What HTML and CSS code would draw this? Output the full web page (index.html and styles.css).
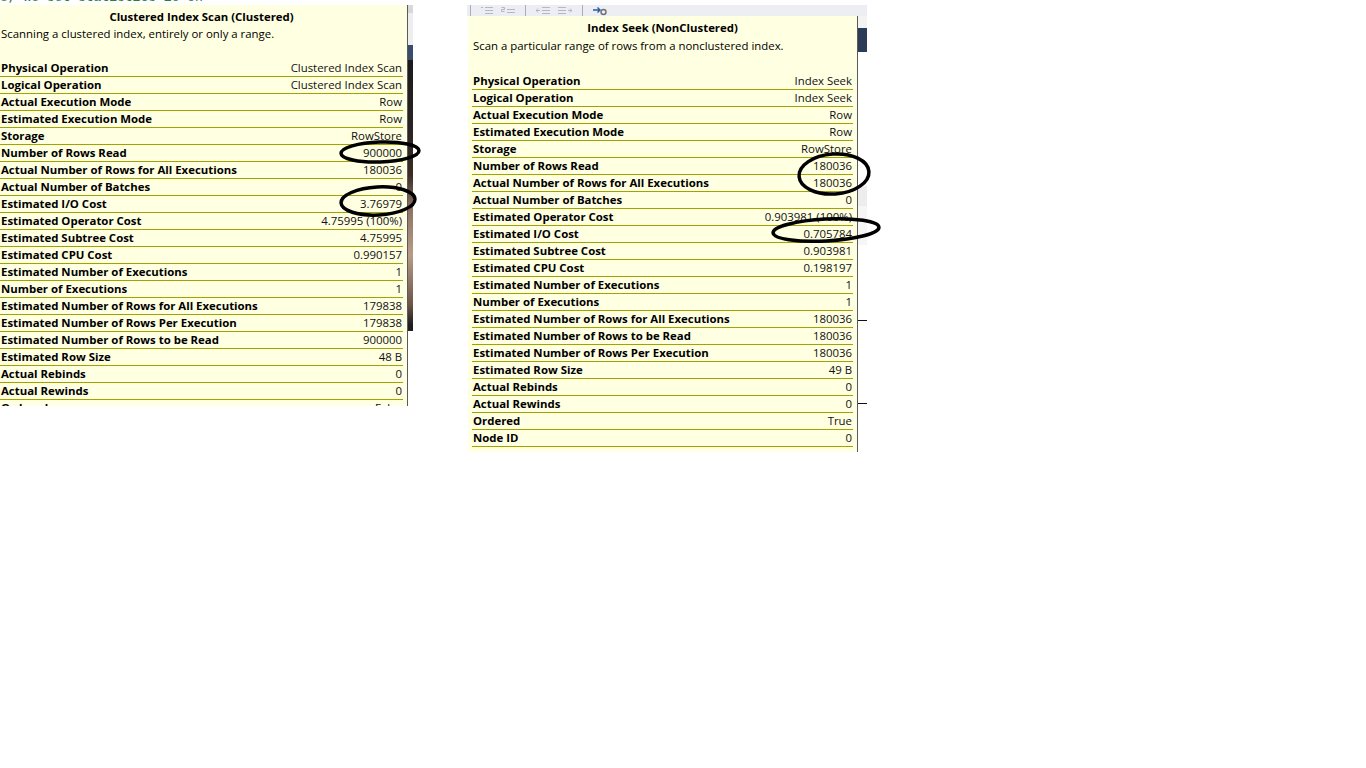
FILE: index.html
```html
<!DOCTYPE html>
<html>
<head>
<meta charset="utf-8">
<link rel="stylesheet" href="styles.css">
</head>
<body>
<div class="canvas">
  <div class="shot shot-left">
    <div class="code-strip"><span class="code-line">e, we set statistics io on</span></div>
    <div class="shot-body">
      <div class="tip tip-left">
        <div class="tip-title">Clustered Index Scan (Clustered)</div>
        <div class="tip-desc">Scanning a clustered index, entirely or only a range.</div>
        <div class="rows">
          <div class="row"><span class="k">Physical Operation</span><span class="v">Clustered Index Scan</span></div>
          <div class="row"><span class="k">Logical Operation</span><span class="v">Clustered Index Scan</span></div>
          <div class="row"><span class="k">Actual Execution Mode</span><span class="v">Row</span></div>
          <div class="row"><span class="k">Estimated Execution Mode</span><span class="v">Row</span></div>
          <div class="row"><span class="k">Storage</span><span class="v">RowStore</span></div>
          <div class="row"><span class="k">Number of Rows Read</span><span class="v">900000</span></div>
          <div class="row"><span class="k">Actual Number of Rows for All Executions</span><span class="v">180036</span></div>
          <div class="row"><span class="k">Actual Number of Batches</span><span class="v">0</span></div>
          <div class="row"><span class="k">Estimated I/O Cost</span><span class="v">3.76979</span></div>
          <div class="row"><span class="k">Estimated Operator Cost</span><span class="v">4.75995 (100%)</span></div>
          <div class="row"><span class="k">Estimated Subtree Cost</span><span class="v">4.75995</span></div>
          <div class="row"><span class="k">Estimated CPU Cost</span><span class="v">0.990157</span></div>
          <div class="row"><span class="k">Estimated Number of Executions</span><span class="v">1</span></div>
          <div class="row"><span class="k">Number of Executions</span><span class="v">1</span></div>
          <div class="row"><span class="k">Estimated Number of Rows for All Executions</span><span class="v">179838</span></div>
          <div class="row"><span class="k">Estimated Number of Rows Per Execution</span><span class="v">179838</span></div>
          <div class="row"><span class="k">Estimated Number of Rows to be Read</span><span class="v">900000</span></div>
          <div class="row"><span class="k">Estimated Row Size</span><span class="v">48 B</span></div>
          <div class="row"><span class="k">Actual Rebinds</span><span class="v">0</span></div>
          <div class="row"><span class="k">Actual Rewinds</span><span class="v">0</span></div>
          <div class="row"><span class="k">Ordered</span><span class="v">False</span></div>
        </div>
      </div>
      <div class="side side-left"></div>
    </div>
  </div>

  <div class="shot shot-right">
    <div class="toolbar">
      <span class="sep"></span>
      <svg class="ico" width="12" height="9" viewBox="0 0 12 9"><g stroke="#b4b8c2" stroke-width="1"><path d="M0 1.5h2M4 1.5h8M4 4.5h8M4 7.5h8"/></g></svg>
      <svg class="ico" width="14" height="9" viewBox="0 0 14 9"><g stroke="#b4b8c2" stroke-width="1" fill="none"><path d="M0.5 1.5h3v2h-3v2h3"/><path d="M6 3.5h8M6 6.5h8"/></g></svg>
      <span class="sep"></span>
      <svg class="ico" width="14" height="9" viewBox="0 0 14 9"><g stroke="#b4b8c2" stroke-width="1" fill="none"><path d="M0 4.5h4M2 2.5l-2 2 2 2"/><path d="M6 1.5h8M6 4.5h8M6 7.5h8"/></g></svg>
      <svg class="ico" width="14" height="9" viewBox="0 0 14 9"><g stroke="#b4b8c2" stroke-width="1" fill="none"><path d="M0 1.5h8M0 4.5h8M0 7.5h8"/><path d="M10 4.5h4M12 2.5l2 2-2 2"/></g></svg>
      <span class="sep"></span>
      <svg class="ico" width="14" height="10" viewBox="0 0 14 10"><g fill="none" stroke-width="1.4"><path d="M0 4h7M4.5 1.5l2.5 2.5-2.5 2.5" stroke="#1f5fa8"/><circle cx="10.5" cy="6" r="2.5" stroke="#707070"/></g></svg>
    </div>
    <div class="shot-body">
      <div class="gap-col"></div>
      <div class="tip tip-right">
        <div class="tip-title">Index Seek (NonClustered)</div>
        <div class="tip-desc">Scan a particular range of rows from a nonclustered index.</div>
        <div class="rows">
          <div class="row"><span class="k">Physical Operation</span><span class="v">Index Seek</span></div>
          <div class="row"><span class="k">Logical Operation</span><span class="v">Index Seek</span></div>
          <div class="row"><span class="k">Actual Execution Mode</span><span class="v">Row</span></div>
          <div class="row"><span class="k">Estimated Execution Mode</span><span class="v">Row</span></div>
          <div class="row"><span class="k">Storage</span><span class="v">RowStore</span></div>
          <div class="row"><span class="k">Number of Rows Read</span><span class="v">180036</span></div>
          <div class="row"><span class="k">Actual Number of Rows for All Executions</span><span class="v">180036</span></div>
          <div class="row"><span class="k">Actual Number of Batches</span><span class="v">0</span></div>
          <div class="row"><span class="k">Estimated Operator Cost</span><span class="v">0.903981 (100%)</span></div>
          <div class="row"><span class="k">Estimated I/O Cost</span><span class="v">0.705784</span></div>
          <div class="row"><span class="k">Estimated Subtree Cost</span><span class="v">0.903981</span></div>
          <div class="row"><span class="k">Estimated CPU Cost</span><span class="v">0.198197</span></div>
          <div class="row"><span class="k">Estimated Number of Executions</span><span class="v">1</span></div>
          <div class="row"><span class="k">Number of Executions</span><span class="v">1</span></div>
          <div class="row"><span class="k">Estimated Number of Rows for All Executions</span><span class="v">180036</span></div>
          <div class="row"><span class="k">Estimated Number of Rows to be Read</span><span class="v">180036</span></div>
          <div class="row"><span class="k">Estimated Number of Rows Per Execution</span><span class="v">180036</span></div>
          <div class="row"><span class="k">Estimated Row Size</span><span class="v">49 B</span></div>
          <div class="row"><span class="k">Actual Rebinds</span><span class="v">0</span></div>
          <div class="row"><span class="k">Actual Rewinds</span><span class="v">0</span></div>
          <div class="row"><span class="k">Ordered</span><span class="v">True</span></div>
          <div class="row"><span class="k">Node ID</span><span class="v">0</span></div>
        </div>
      </div>
      <div class="side side-right"></div>
    </div>
  </div>
</div>

<svg class="marks" width="1366" height="768" viewBox="0 0 1366 768">
  <g fill="none" stroke="#000" stroke-width="3.5">
    <ellipse cx="380" cy="152" rx="39" ry="10" transform="rotate(-2 380 152)"/>
    <ellipse cx="378" cy="201" rx="37" ry="14" transform="rotate(-3 378 201)"/>
    <ellipse cx="834" cy="174" rx="35" ry="20" transform="rotate(-4 834 174)"/>
    <ellipse cx="826" cy="230" rx="53" ry="11" transform="rotate(-3 826 230)"/>
  </g>
</svg>
</body>
</html>
```

FILE: styles.css
```css
html, body {
  margin: 0;
  padding: 0;
  background: #ffffff;
}

body {
  position: relative;
  width: 1366px;
  height: 768px;
  overflow: hidden;
  font-family: "Open Sans", "DejaVu Sans", sans-serif;
}

.canvas {
  display: flex;
  align-items: flex-start;
}

.shot {
  display: flex;
  flex-direction: column;
  overflow: hidden;
}

.shot-left {
  width: 413px;
  height: 406px;
}

.shot-right {
  width: 400px;
  height: 447px;
  margin-left: 54px;
  margin-top: 5px;
}

.code-strip {
  height: 5px;
  overflow: hidden;
  background: #ffffff;
  flex: none;
}

.code-line {
  display: block;
  margin-top: -9px;
  font-family: "Liberation Mono", monospace;
  font-size: 13px;
  line-height: 14px;
  color: #2e7d32;
  white-space: pre;
}

.shot-body {
  display: flex;
  flex: 1;
  min-height: 0;
}

.tip {
  background: #ffffe1;
  border-right: 1px solid #5a5a5a;
  color: #000;
  font-size: 11.4px;
  box-sizing: border-box;
}

.tip-left {
  width: 408px;
  padding: 4px 4px 0 0;
}

.tip-right {
  width: 390px;
  padding: 4px 4px 6px 4px;
}

.tip-title {
  text-align: center;
  font-weight: 700;
  line-height: 16px;
  height: 16px;
  white-space: nowrap;
}

.tip-desc {
  line-height: 16px;
  height: 16px;
  padding-left: 1px;
  margin-top: 1px;
  margin-bottom: 18px;
  white-space: nowrap;
}

.tip-right .tip-desc {
  margin-top: 2px;
  margin-bottom: 19px;
}

.row {
  display: flex;
  justify-content: space-between;
  height: 16px;
  line-height: 16px;
  border-bottom: 1px solid #a3a300;
  white-space: nowrap;
}

.row .k {
  font-weight: 700;
  padding-left: 1px;
}

.row .v {
  color: #111;
  padding-right: 1px;
}

.side {
  flex: 1;
}

.side-left {
  background: linear-gradient(to bottom,
    #d8d8d8 0px, #d8d8d8 8px,
    #eeeeee 8px, #eeeeee 40px,
    #3b4b6b 40px, #3b4b6b 55px,
    #1b1b1b 55px, #2a2220 120px, #3a2c26 170px,
    #8a6f60 200px, #b89c88 250px, #6b5447 300px,
    #1d1d1d 320px, #1d1d1d 325px,
    #222222 325px, #222222 326px,
    #ffffff 326px);
}

.gap-col {
  width: 1px;
  background: #ffffff;
}

.side-right {
  background:
    linear-gradient(#111, #111) 0 304px / 9px 1px no-repeat,
    linear-gradient(#111, #111) 0 387px / 9px 1px no-repeat,
    linear-gradient(to bottom,
      #f3f3f3 0px, #f3f3f3 12px,
      #2b3b58 12px, #2b3b58 36px,
      #ffffff 36px, #ffffff 170px,
      #ededed 170px, #ededed 190px,
      #f6f6f6 190px, #f6f6f6 229px,
      #ffffff 229px);
}

.toolbar {
  height: 11px;
  flex: none;
  background: #eceef4;
  display: flex;
  align-items: center;
  gap: 8px;
  padding-left: 1px;
  overflow: hidden;
}

.toolbar .sep {
  width: 1px;
  height: 11px;
  background: #a9adb8;
  margin: 0 2px;
}

.toolbar .ico {
  display: block;
  flex: none;
}

.marks {
  position: absolute;
  left: 0;
  top: 0;
  pointer-events: none;
}
```
